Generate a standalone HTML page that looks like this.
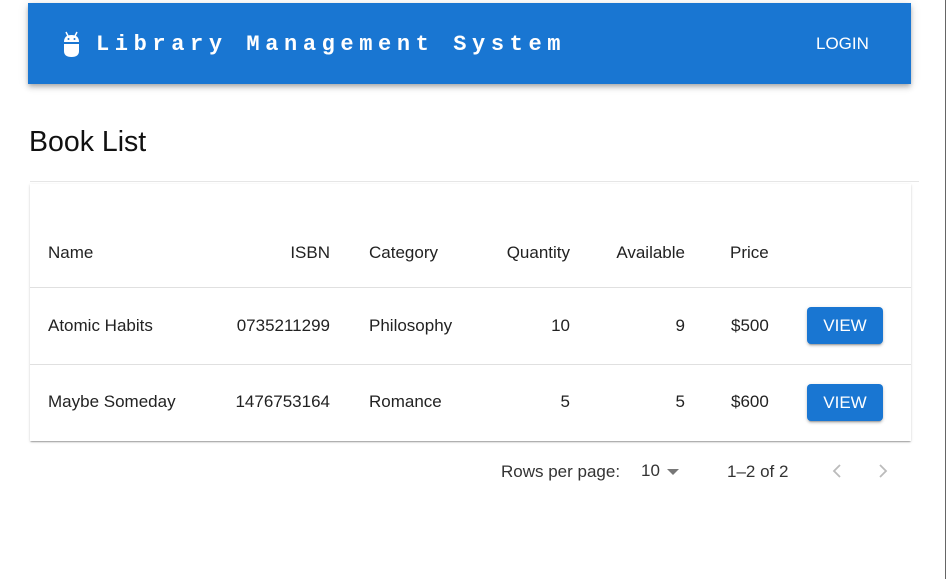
<!DOCTYPE html>
<html><head><style>
*{margin:0;padding:0;box-sizing:border-box}
body{width:949px;height:579px;background:#fff;font-family:"Liberation Sans",Arial,sans-serif;position:relative;overflow:hidden;color:#222}
.bar{position:absolute;left:28px;top:3px;width:883px;height:81px;background:#1976d2;box-shadow:0 2px 4px -1px rgba(0,0,0,.2),0 4px 5px rgba(0,0,0,.14),0 1px 10px rgba(0,0,0,.12)}
.title{position:absolute;left:96px;top:33px;color:#fff;font-family:"Liberation Mono",monospace;font-weight:bold;font-size:22px;letter-spacing:5.6px;white-space:nowrap;line-height:24px}
.login{position:absolute;left:816px;top:34px;color:#fff;font-size:17px}
h1{position:absolute;left:29px;top:126px;font-weight:normal;font-size:28.5px;color:#111}
.div{position:absolute;left:30px;top:181px;width:889px;height:1px;background:#e6e6e6}
.paper{position:absolute;left:30px;top:184px;width:881px;height:257px;background:#fff;box-shadow:0 2px 1px -1px rgba(0,0,0,.2),0 1px 1px rgba(0,0,0,.14),0 1px 3px rgba(0,0,0,.12)}
.t{position:absolute;font-size:17px;white-space:nowrap;line-height:20px}
.r{text-align:right}
.hl{position:absolute;left:30px;width:881px;height:1px;background:#e0e0e0}
.btn{position:absolute;left:807px;width:76px;height:37px;background:#1976d2;color:#fff;border-radius:4px;font-size:17px;text-align:center;line-height:37px;box-shadow:0 3px 1px -2px rgba(0,0,0,.2),0 2px 2px rgba(0,0,0,.14),0 1px 5px rgba(0,0,0,.12)}
.edge{position:absolute;left:945px;top:0;width:1px;height:579px;background:#666}
</style></head><body>
<div class="bar"></div>
<svg style="position:absolute;left:62px;top:31px" width="19" height="27" viewBox="0 0 19 27">
<path d="M4 1 L6 5 M15 1 L13 5" stroke="#fff" stroke-width="1.5"/>
<path d="M2 11 Q2 4 9.5 4 Q17 4 17 11 Z" fill="#fff"/>
<circle cx="6.5" cy="8" r="1" fill="#1976d2"/><circle cx="12.5" cy="8" r="1" fill="#1976d2"/>
<path d="M2 13 H17 V20 Q17 26 9.5 26 Q2 26 2 20 Z" fill="#fff"/>
</svg>
<div class="title">Library Management System</div>
<div class="login">LOGIN</div>
<h1>Book List</h1>
<div class="div"></div>
<div class="paper"></div>
<div class="t" style="left:48px;top:243px">Name</div>
<div class="t r" style="left:230px;width:100px;top:243px">ISBN</div>
<div class="t" style="left:369px;top:243px">Category</div>
<div class="t r" style="left:470px;width:100px;top:243px">Quantity</div>
<div class="t r" style="left:585px;width:100px;top:243px">Available</div>
<div class="t" style="left:730px;top:243px">Price</div>
<div class="hl" style="top:287px"></div>
<div class="t" style="left:48px;top:316px">Atomic Habits</div>
<div class="t r" style="left:200px;width:130px;top:316px">0735211299</div>
<div class="t" style="left:369px;top:316px">Philosophy</div>
<div class="t r" style="left:470px;width:100px;top:316px">10</div>
<div class="t r" style="left:585px;width:100px;top:316px">9</div>
<div class="t" style="left:731px;top:316px">$500</div>
<div class="btn" style="top:307px">VIEW</div>
<div class="hl" style="top:364px"></div>
<div class="t" style="left:48px;top:392px">Maybe Someday</div>
<div class="t r" style="left:200px;width:130px;top:392px">1476753164</div>
<div class="t" style="left:369px;top:392px">Romance</div>
<div class="t r" style="left:470px;width:100px;top:392px">5</div>
<div class="t r" style="left:585px;width:100px;top:392px">5</div>
<div class="t" style="left:731px;top:392px">$600</div>
<div class="btn" style="top:384px">VIEW</div>
<div class="t" style="left:501px;top:462px;color:#333">Rows per page:</div>
<div class="t" style="left:641px;top:461px;color:#333">10</div>
<svg style="position:absolute;left:667px;top:469px" width="12" height="6"><path d="M0 0 L12 0 L6 6Z" fill="#777"/></svg>
<div class="t" style="left:727px;top:462px;color:#333">1–2 of 2</div>
<svg style="position:absolute;left:830px;top:463px" width="60" height="16" fill="none" stroke="#bbb" stroke-width="1.8"><path d="M10 2 L4 8 L10 14"/><path d="M50 2 L56 8 L50 14"/></svg>
<div class="edge"></div>
</body></html>
